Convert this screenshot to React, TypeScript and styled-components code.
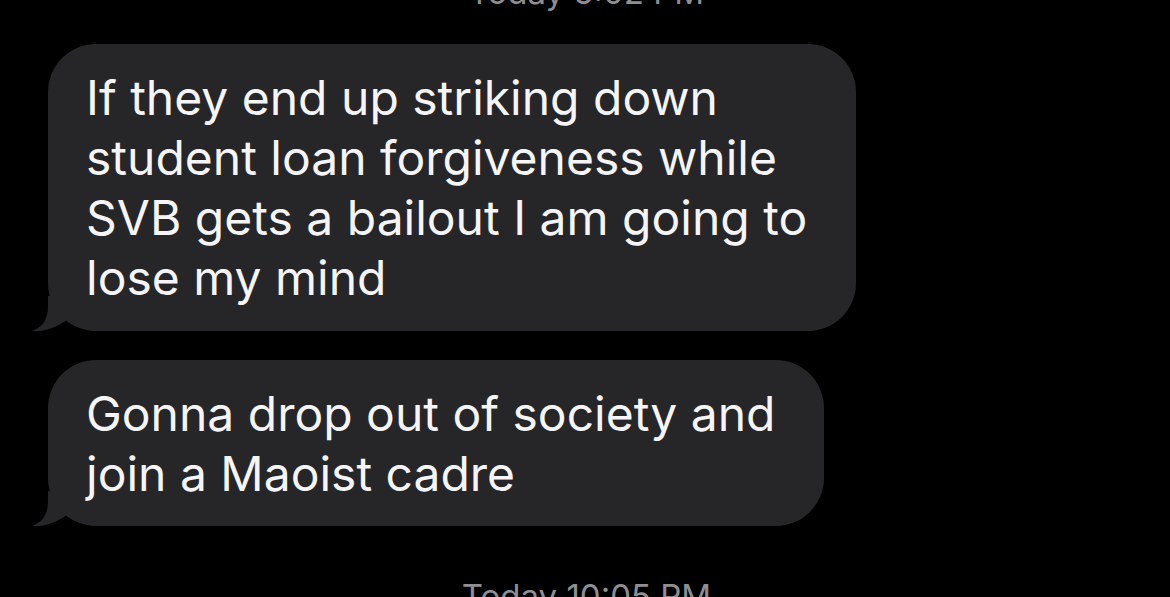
import * as React from 'react';
import styled, { createGlobalStyle } from 'styled-components';

const Global = createGlobalStyle`
  html, body {
    margin: 0;
    padding: 0;
    background: #000;
    overflow: hidden;
  }
`;

function Tail() {
  return (
    <TailSvg viewBox="0 0 40 36" width={40} height={36}>
      <path d="M16 0 L16 10 C16 23 11 31 0 35 C12 36 23 32 35 24 C37 26 39 27 40 27 L40 0 Z" />
    </TailSvg>
  );
}

function Bubble({ lines, $pad }: { lines: string[]; $pad: number }) {
  return (
    <BubbleBox $pad={$pad}>
      {lines.map((line) => (
        <Line key={line}>{line}</Line>
      ))}
      <Tail />
    </BubbleBox>
  );
}

export default function App() {
  return (
    <Screen>
      <Global />
      <Stamp $top={-28}>Today 5:02 PM</Stamp>
      <Thread>
        <Bubble
          $pad={23}
          lines={[
            'If they end up striking down',
            'student loan forgiveness while',
            'SVB gets a bailout I am going to',
            'lose my mind',
          ]}
        />
        <Bubble $pad={22} lines={['Gonna drop out of society and', 'join a Maoist cadre']} />
      </Thread>
      <Stamp $top={50}>Today 10:05 PM</Stamp>
    </Screen>
  );
}

const Screen = styled.div`
  width: 1170px;
  height: 597px;
  background: #000;
  overflow: hidden;
  font-family: Inter, 'Liberation Sans', sans-serif;
`;

const Stamp = styled.div<{ $top: number }>`
  margin-top: ${(p) => p.$top}px;
  text-align: center;
  color: #8e8e93;
  font-size: 33px;
  line-height: 40px;
  padding-left: 3px;
`;

const Thread = styled.div`
  display: flex;
  flex-direction: column;
  align-items: flex-start;
  gap: 29px;
  padding-left: 48px;
  margin-top: 32px;
`;

const BubbleBox = styled.div<{ $pad: number }>`
  position: relative;
  background: #262628;
  border-radius: 48px;
  padding: 24px 49px ${(p) => p.$pad}px 38px;
  color: #f5f5f7;
  font-size: 48px;
  line-height: 60px;
`;

const Line = styled.div`
  white-space: nowrap;
`;

const TailSvg = styled.svg`
  position: absolute;
  left: -16px;
  bottom: -1px;
  fill: #262628;
`;
